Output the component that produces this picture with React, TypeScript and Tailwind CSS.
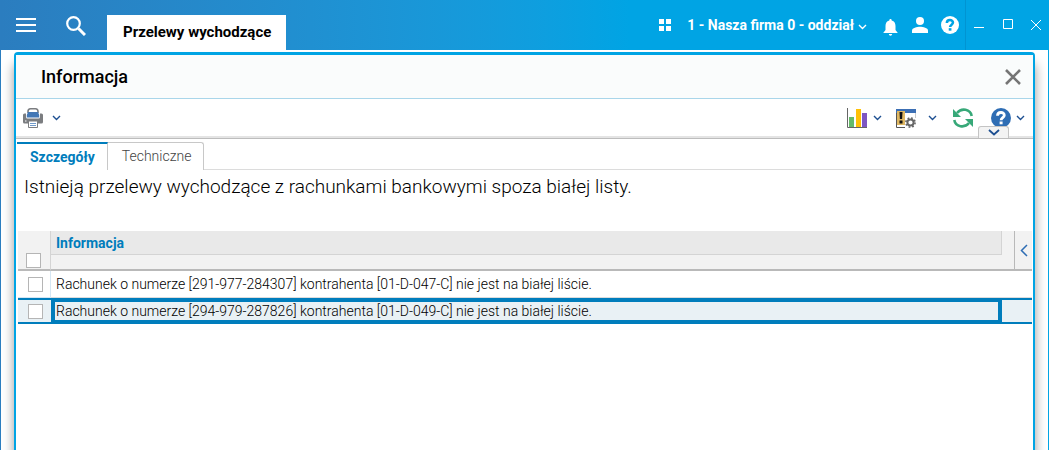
import { useState } from "react";

const rows = [
  "Rachunek o numerze [291-977-284307] kontrahenta [01-D-047-C] nie jest na białej liście.",
  "Rachunek o numerze [294-979-287826] kontrahenta [01-D-049-C] nie jest na białej liście.",
];

const tabs = ["Szczegóły", "Techniczne"];

const checkboxClass =
  "block w-[15px] h-[15px] appearance-none border border-[#b5b5b5] bg-white checked:bg-[#007dbc]";

function Chevron({ className = "" }: { className?: string }) {
  return (
    <svg className={className} width="9" height="6" viewBox="0 0 9 6" fill="none" stroke="currentColor" strokeWidth="1.4">
      <path d="M1 1l3.5 3.5L8 1" />
    </svg>
  );
}

function PrinterIcon() {
  return (
    <svg width="20" height="20" viewBox="0 0 20 20">
      <path d="M1.500 5.500h17Q20 5.500 20 7v7q0 1.500-1.500 1.500h-17Q0 15.500 0 14V7q0-1.500 1.500-1.500z" fill="#7b7d80" />
      <path d="M3 4.500h14V9q0 1.500-1.500 1.500h-11Q3 10.500 3 9z" fill="#fff" />
      <path d="M5 5V3.500Q5 .8 7.500.8h5Q15 .8 15 3.500V5" fill="#fff" stroke="#7b7d80" strokeWidth="1.600" />
      <path d="M5 4h10l1.200 3v2.500H3.800V7z" fill="#4377b5" />
      <path d="M5.500 13h9v6.500h-9z" fill="#fff" stroke="#7b7d80" />
      <path d="M7 15.500h6M7 17.500h6" stroke="#6f99c9" />
      <path d="M2 13h1.500" stroke="#fff" />
    </svg>
  );
}

function ChartIcon() {
  return (
    <svg width="20" height="20" viewBox="0 0 20 20">
      <path d="M.5 0v19.500H20" fill="none" stroke="#666" />
      <path d="M2 9h5v10H2z" fill="#66bb6a" />
      <path d="M9 1h5v18H9z" fill="#ffc107" />
      <path d="M15 5h5v14h-5z" fill="#7e57c2" />
    </svg>
  );
}

function WindowSettingsIcon() {
  return (
    <svg width="20" height="20" viewBox="0 0 20 20">
      <path d="M0 1h20v4H0z" fill="#3c6fb4" />
      <path d="M.5 5v14.500H9" fill="none" stroke="#555" />
      <path d="M19.500 5v5" stroke="#ccc" />
      <path d="M1 3h8v14H1z" fill="#e0b863" />
      <path d="M3.500 4h3l-.4 7H3.900zM3.500 12.500h3v3h-3z" fill="#111" />
      <circle cx="14.500" cy="14.500" r="3.100" fill="#fff" stroke="#666" strokeWidth="2" />
      <circle cx="14.500" cy="14.500" r="4.600" fill="none" stroke="#666" strokeWidth="1.600" strokeDasharray="1.800 1.813" />
    </svg>
  );
}

function RefreshIcon() {
  return (
    <svg width="20" height="20" viewBox="0 0 20 20" fill="none" stroke="#37a878" strokeWidth="2.600">
      <path d="M18.700 8C17.500 1 8.500-.5 4 5" />
      <path d="M1.300 12C2.500 19 11.500 20.500 16 15" />
      <path d="M0 1v8h8zM20 19v-8h-8z" fill="#37a878" stroke="none" />
    </svg>
  );
}

function HelpIcon({ size, disc, mark }: { size: number; disc: string; mark: string }) {
  return (
    <svg width={size} height={size} viewBox="0 0 20 20">
      <circle cx="10" cy="10" r="10" fill={disc} />
      <path d="M6.500 7.800C6.500 3.400 13.300 3.600 13.300 7.300c0 2.300-3.200 2.400-3.200 5" fill="none" stroke={mark} strokeWidth="2.800" />
      <path d="M8.600 13.500h3v2.800h-3z" fill={mark} />
    </svg>
  );
}

function TopBar() {
  return (
    <header className="relative z-10 flex h-[50px] bg-linear-to-r from-[#2b7dbf] to-[#00a4e4] to-60% text-white">
      <button aria-label="Menu" className="ml-[15px] mr-[30px]">
        <svg width="20" height="14" viewBox="0 0 20 14" fill="currentColor">
          <path d="M0 0h20v2H0zM0 6h20v2H0zM0 12h20v2H0z" />
        </svg>
      </button>
      <button aria-label="Szukaj" className="pt-px">
        <svg width="20" height="20" viewBox="0 0 20 20" fill="none" stroke="currentColor">
          <circle cx="7.500" cy="7.500" r="6.300" strokeWidth="2.200" />
          <path d="M12.500 12.500l6.500 6.500" strokeWidth="3" />
        </svg>
      </button>
      <button className="ml-[21px] mt-[15px] bg-white pl-4 pr-[15px] text-[15px] font-bold whitespace-nowrap text-black">
        Przelewy wychodzące
      </button>

      <div className="ml-auto flex items-center">
        <button aria-label="Moduły" className="mr-4">
          <svg width="12" height="12" viewBox="0 0 12 12" fill="currentColor">
            <path d="M0 0h5v5H0zM7 0h5v5H7zM0 7h5v5H0zM7 7h5v5H7z" />
          </svg>
        </button>
        <button className="mr-4 flex items-center gap-1 text-[14px] font-bold whitespace-nowrap">
          1 - Nasza firma 0 - oddział
          <Chevron className="mt-1" />
        </button>
        <button aria-label="Powiadomienia" className="mr-[14px] pt-1">
          <svg width="15" height="17" viewBox="0 0 15 17" fill="currentColor">
            <path d="M7.500 0c.9 0 1.200.6 1.200 1.500C11.500 2.200 12.500 4.500 12.500 7v4l2.300 3H.2l2.300-3V7c0-2.500 1-4.800 3.800-5.500C6.300.6 6.600 0 7.500 0zM5.800 15h3.400q-.2 1.800-1.700 1.800T5.800 15z" />
          </svg>
        </button>
        <button aria-label="Użytkownik" className="mr-[13px]">
          <svg width="16" height="16" viewBox="0 0 16 16" fill="currentColor">
            <circle cx="8" cy="4" r="4" />
            <path d="M0 16v-2.500C0 11 5 9.800 8 9.800s8 1.200 8 3.700V16z" />
          </svg>
        </button>
        <button aria-label="Pomoc" className="mr-[6px]">
          <HelpIcon size={18} disc="#fff" mark="#00a4e4" />
        </button>
        <div className="flex h-full items-center border-l border-[#0094d2] pl-2 pr-[7px]">
          <button aria-label="Minimalizuj" className="mr-[19px] pt-[5px]">
            <svg width="10" height="1" viewBox="0 0 10 1" fill="currentColor">
              <path d="M0 0h10v1H0z" />
            </svg>
          </button>
          <button aria-label="Maksymalizuj" className="mr-[17px] pb-px">
            <svg width="11" height="11" viewBox="0 0 11 11" fill="none" stroke="currentColor">
              <path d="M.5.5h9v9h-9z" />
            </svg>
          </button>
          <button aria-label="Zamknij">
            <svg width="10" height="10" viewBox="0 0 10 10" fill="none" stroke="currentColor">
              <path d="M0 0l10 10M10 0L0 10" />
            </svg>
          </button>
        </div>
      </div>
    </header>
  );
}

function Toolbar() {
  return (
    <div className="relative flex h-10 items-center border-b border-[#bdbdbd] pb-px pl-[7px] pr-2 text-[#1d4f91] shadow-[inset_0_-2px_0_#e4e4e4]">
      <button aria-label="Drukuj" className="flex items-center gap-[9px]">
        <PrinterIcon />
        <Chevron />
      </button>
      <div className="ml-auto flex items-center">
        <button aria-label="Wykresy" className="mr-[14px] flex items-center gap-[6px]">
          <ChartIcon />
          <Chevron />
        </button>
        <button aria-label="Ustawienia widoku" className="mr-4 flex items-center gap-3">
          <WindowSettingsIcon />
          <Chevron />
        </button>
        <button aria-label="Odśwież" className="mr-[18px]">
          <RefreshIcon />
        </button>
        <button aria-label="Pomoc okna" className="flex items-center gap-[5px]">
          <HelpIcon size={20} disc="#2e6db4" mark="#fff" />
          <Chevron />
        </button>
      </div>
      <button
        aria-label="Zwiń pasek"
        className="absolute bottom-0 right-6 flex h-3 w-[31px] items-center justify-center rounded-t-[3px] border border-b-0 border-[#c4c4c4] bg-[#f3f3f3]"
      >
        <svg width="12" height="7" viewBox="0 0 12 7" fill="none" stroke="currentColor" strokeWidth="1.800">
          <path d="M1 1l5 4.500L11 1" />
        </svg>
      </button>
    </div>
  );
}

function MessageTable() {
  const [selected, setSelected] = useState(1);

  return (
    <table className="ml-[2px] w-[calc(100%-3px)] table-fixed border-separate border-spacing-0 text-left text-[14px]">
      <colgroup>
        <col className="w-[33px]" />
        <col />
        <col className="w-3" />
        <col className="w-[18px]" />
      </colgroup>
      <thead className="bg-[#f2f2f2]">
        <tr className="h-6">
          <th rowSpan={2} className="border-b-2 border-r border-b-[#b9b9b9] border-r-[#d4d4d4] pb-px pl-2 align-bottom">
            <input type="checkbox" aria-label="Zaznacz wszystkie" className={checkboxClass} />
          </th>
          <th className="border-b border-r border-[#d4d4d4] bg-[#e9e9e9] px-[5px] text-[14px] leading-4 font-bold text-[#007dbc]">
            Informacja
          </th>
          <td />
          <td rowSpan={2} className="border-b-2 border-l border-b-[#b9b9b9] border-l-[#b9b9b9] text-[#2e6db4]">
            <button aria-label="Pokaż panel" className="flex w-full justify-center">
              <svg width="8" height="13" viewBox="0 0 8 13" fill="none" stroke="currentColor" strokeWidth="1.500">
                <path d="M7 1L1.500 6.500 7 12" />
              </svg>
            </button>
          </td>
        </tr>
        <tr className="h-4">
          <td colSpan={2} className="border-b-2 border-[#b9b9b9]" />
        </tr>
      </thead>
      <tbody className="font-[350] text-black">
        {rows.map((text, i) => {
          const active = i === selected;
          return (
            <tr
              key={text}
              onClick={() => setSelected(i)}
              className={active ? "h-[26px] bg-[#e9f1f5]" : "h-[27px]"}
            >
              <td className={active ? "border-y-2 border-[#007dbc] pl-[10px]" : "border-b border-r border-[#d5e6f3] pl-[10px]"}>
                <input type="checkbox" aria-label={text} className={checkboxClass} />
              </td>
              <td
                className={
                  active
                    ? "truncate border-4 border-[#007dbc] pl-px leading-4"
                    : "truncate border-b border-[#dcdcdc] pl-[5px] leading-4"
                }
              >
                {text}
              </td>
              <td colSpan={2} className={active ? "border-y-2 border-[#007dbc]" : "border-b border-[#dcdcdc]"} />
            </tr>
          );
        })}
      </tbody>
    </table>
  );
}

export default function App() {
  const [tab, setTab] = useState(tabs[0]);

  return (
    <div className="flex h-screen flex-col overflow-hidden border-r border-l border-l-[#2b7dbf] border-r-[#00a4e4] bg-white font-[Roboto,sans-serif] text-[#111]">
      <TopBar />
      <main className="mx-[13px] mt-[2px] flex-1 rounded-t-[4px] border-x-2 border-t-3 border-[#00a4e4] bg-white shadow-[0_12px_12px_rgba(0,0,0,0.4)]">
        <div className="flex h-11 items-center justify-between border-b border-[#a9d6ea] bg-[#fafcfc] pl-[25px] pr-3">
          <h1 className="text-[18px] font-medium text-black">Informacja</h1>
          <button aria-label="Zamknij okno" className="text-[#757575]">
            <svg width="16" height="16" viewBox="0 0 16 16" fill="none" stroke="currentColor" strokeWidth="2.600">
              <path d="M1 1l14 14M15 1L1 15" />
            </svg>
          </button>
        </div>
        <Toolbar />

        <div role="tablist" className="ml-px mt-[3px] flex h-7 text-[14px]">
          {tabs.map((name) => (
            <button
              key={name}
              role="tab"
              aria-selected={tab === name}
              onClick={() => setTab(name)}
              className={
                tab === name
                  ? "border-r border-t-2 border-r-[#c8c8c8] border-t-[#007dbc] pl-[13px] pr-3 font-bold text-[#007dbc]"
                  : "rounded-tr-[3px] border-r border-t border-[#c8c8c8] pl-[14px] pr-3 font-[350] text-[#444]"
              }
            >
              {name}
            </button>
          ))}
          <div className="flex-1 border-b border-[#dcdcdc]" />
        </div>

        <p className="px-2 pb-[31px] pt-1 text-[19px] leading-[26px] font-[350] text-black">
          Istnieją przelewy wychodzące z rachunkami bankowymi spoza białej listy.
        </p>
        <MessageTable />
      </main>
    </div>
  );
}
